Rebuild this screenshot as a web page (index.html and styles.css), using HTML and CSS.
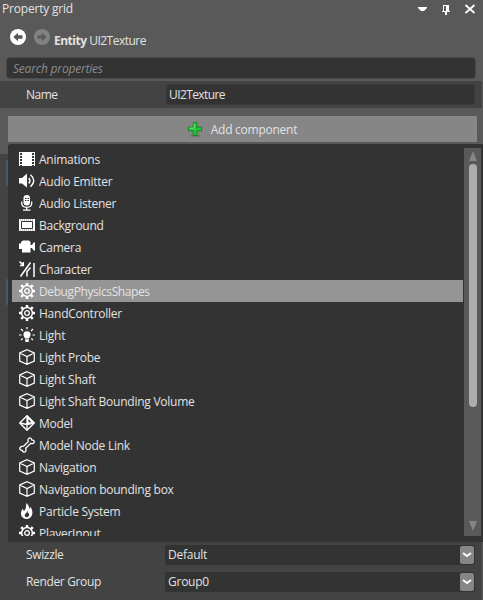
FILE: index.html
```
<!DOCTYPE html>
<html lang="en">
<head>
<meta charset="utf-8">
<title>Property grid</title>
<link rel="stylesheet" href="styles.css">
</head>
<body>
<svg class="defs" width="0" height="0" aria-hidden="true">
  <symbol id="gear" viewBox="0 0 16 16"><circle cx="8" cy="8" r="5.4" fill="none" stroke="currentColor" stroke-width="1.5"/><circle cx="8" cy="8" r="2.3" fill="none" stroke="currentColor" stroke-width="1.3"/><path d="M8 0v3M8 13v3M0 8h3M13 8h3M2.200 2.200l2 2M11.800 11.800l2 2M13.800 2.200l-2 2M4.200 11.800l-2 2" stroke="currentColor" stroke-width="2.500"/></symbol>
  <symbol id="cube" viewBox="0 0 16 16"><path d="M8 .7L15.300 4v8L8 15.300.7 12V4zM.7 4L8 7.600 15.300 4M8 7.600v7.700" fill="none" stroke="currentColor" stroke-width="1.200"/></symbol>
</svg>
<main class="panel">
  <header class="title">
    <span class="title-text">Property grid</span>
    <svg class="window-icons" width="60" height="18" viewBox="0 0 60 18"><path d="M0 7h9v1L6 11H3L0 8z" fill="#fff"/><path d="M25 5h6v6h1v1h-3v3h-2v-3h-3v-1h1zM26 6v5h2V6z" fill="#fff" fill-rule="evenodd"/><path d="M47.500 5l9 8M56.500 5l-9 8" stroke="#fff" stroke-width="1.700"/></svg>
  </header>
  <div class="crumbs">
    <svg width="16" height="16" viewBox="0 0 16 16"><circle cx="8" cy="8" r="8" fill="#fff"/><path d="M3.300 8L8 3.700v2.600h4.500v3.400H8v2.600z" fill="#555"/></svg>
    <svg width="16" height="16" viewBox="0 0 16 16"><circle cx="8" cy="8" r="8" fill="#828282"/><path d="M12.700 8L8 3.700v2.600H3.500v3.400H8v2.600z" fill="#5c5c5c"/></svg>
    <span class="entity"><b>Entity</b> UI2Texture</span>
  </div>
  <div class="search">Search properties</div>
  <div class="row name-row"><span class="label">Name</span><div class="input">UI2Texture</div></div>
  <div class="add-area">
    <div class="add">
      <svg width="14" height="15" viewBox="0 0 14 15"><ellipse cx="7" cy="13.700" rx="5" ry="1" fill="#6b6b6b"/><path d="M5.200.5h3.600v4.700h4.700v3.600H8.800v4.700H5.200V8.800H.5V5.200h4.700z" fill="#22c63a" stroke="#128a22"/><path d="M6.200 1.500v4.700H1.500" fill="none" stroke="#6bea76"/></svg>
      <span>Add component</span>
    </div>
  </div>
  <section class="properties">
    <div class="row"><span class="label">Swizzle</span><div class="combo"><span>Default</span><span class="drop"><svg width="10" height="6" viewBox="0 0 10 6"><path d="M1 1l4 3 4-3" fill="none" stroke="#fff" stroke-width="1.800"/></svg></span></div></div>
    <div class="row"><span class="label">Render Group</span><div class="combo"><span>Group0</span><span class="drop"><svg width="10" height="6" viewBox="0 0 10 6"><path d="M1 1l4 3 4-3" fill="none" stroke="#fff" stroke-width="1.800"/></svg></span></div></div>
  </section>
  <i class="mark mark-top"></i><i class="mark mark-mid"></i>
  <div class="popup">
    <ul class="list">
      <li><svg viewBox="0 0 16 16"><path d="M0 1h16v14H0z" fill="#fff"/><path d="M2 2v13M14 2v13" stroke="#333" stroke-width="2" stroke-dasharray="2 1"/></svg><span>Animations</span></li>
      <li><svg viewBox="0 0 16 16"><path d="M0 5h3l5-4.500v14L3 10.500H0z" fill="#fff"/><path d="M9.800 5q2.200 2.700 0 5.500M11.500 1.800q6.500 5.700 0 12" fill="none" stroke="#fff" stroke-width="1.500"/></svg><span>Audio Emitter</span></li>
      <li><svg viewBox="0 0 16 16"><rect x="4.500" y="0" width="6.500" height="10.500" rx="3.200" fill="#fff"/><path d="M6 3.500h1.500M8.500 3.500H10M6 5.500h1.500M8.500 5.500H10" stroke="#333"/><path d="M2.700 6.500v1.800q0 4 5 4t5-4V6.500M7.700 12v3M4 15.200h7.500" fill="none" stroke="#fff" stroke-width="1.300"/></svg><span>Audio Listener</span></li>
      <li><svg viewBox="0 0 16 16"><path d="M0 2h16v12H0z" fill="#fff"/><path d="M2.500 4.500h11v7h-11z" fill="#fff" stroke="#333"/><path d="M1 3h14M1 13h14" stroke="#333" stroke-dasharray="1 1" stroke-width=".6"/></svg><span>Background</span></li>
      <li><svg viewBox="0 0 16 16"><path d="M0 4.500h2V3l2-1.500h6L11.500 3v3H13l1.500-2.500H16v8h-1.500L13 9h-1.500v4.500H3V10H0z" fill="#fff"/></svg><span>Camera</span></li>
      <li><svg viewBox="0 0 16 16"><path d="M.5.500L4 4M4.300 1v3.500H1M1.500 15.500L11.500 1.500M8 15.500v-5l3.500-4M15 2v14" fill="none" stroke="#fff" stroke-width="1.500"/></svg><span>Character</span></li>
      <li class="selected"><svg><use href="#gear"/></svg><span>DebugPhysicsShapes</span></li>
      <li><svg><use href="#gear"/></svg><span>HandController</span></li>
      <li><svg viewBox="0 0 16 16"><path d="M6 11.500L4.500 8.500Q4 4.300 8 4.300t3.500 4.200l-1.500 3zM6 12.300h4L9.500 15h-3z" fill="#fff"/><path d="M8 0v2.300M0 8h2.500M13.500 8H16M2 2l2 2M14 2l-2 2M2 13l1.700-1.500M14 13l-1.700-1.500" stroke="#fff" stroke-width="1.200"/></svg><span>Light</span></li>
      <li><svg><use href="#cube"/></svg><span>Light Probe</span></li>
      <li><svg><use href="#cube"/></svg><span>Light Shaft</span></li>
      <li><svg><use href="#cube"/></svg><span>Light Shaft Bounding Volume</span></li>
      <li><svg viewBox="0 0 16 16"><path d="M8 .8L15.200 8 8 15.200.8 8z" fill="none" stroke="#fff" stroke-width="1.400"/><path d="M8 0v9.500L16 8z" fill="#fff"/><path d="M9.500 4v3l3 .5z" fill="#333"/><path d="M1 8l7 1.500L15 8M8 1v14" fill="none" stroke="#fff" stroke-width="1.300"/></svg><span>Model</span></li>
      <li><svg viewBox="0 0 16 16"><path d="M4.500 9.200L9.300 4.600Q8.300 1.700 10.300 1q1.800-.5 2.400 1.800 2.700.2 2.500 2-.3 2.200-3.500 1.600L6.700 11.200q1 3-.9 3.900-1.800.6-2.500-1.800-2.600-.1-2.500-1.900.4-2.200 3.700-2.200z" fill="none" stroke="#fff" stroke-width="1.300"/></svg><span>Model Node Link</span></li>
      <li><svg><use href="#cube"/></svg><span>Navigation</span></li>
      <li><svg><use href="#cube"/></svg><span>Navigation bounding box</span></li>
      <li><svg viewBox="0 0 16 16"><path d="M7 0q4 2.500 3.200 6 1.300-.5 1-2.300Q14 7 13.300 11q-1 4.500-5.300 5-5-.2-6-4.500Q1.600 8 4 5.500q0 2 1.200 2.500Q7.800 4 7 0z" fill="#fff"/><path d="M8.200 7.500q.3 2.300 1.800 3.300.6 3-2 3.400-2.500-.2-2.300-2.700Q8 10 8.200 7.500z" fill="#333"/></svg><span>Particle System</span></li>
      <li><svg><use href="#gear"/></svg><span>PlayerInput</span></li>
    </ul>
    <div class="scrollbar">
      <svg width="8" height="10" viewBox="0 0 8 10"><path d="M4 0l4 10H0z" fill="#858585"/></svg>
      <div class="thumb"></div>
      <svg class="down" width="8" height="10" viewBox="0 0 8 10"><path d="M0 0h8L4 10z" fill="#858585"/></svg>
    </div>
  </div>
</main>
</body>
</html>
```
FILE: styles.css
```
* { box-sizing: border-box; }
body {
  margin: 0;
  background: #595959;
  color: #e2e2e2;
  font: 12px/16px "Open Sans", "Noto Sans", sans-serif;
  letter-spacing: -0.25px;
}
svg { display: block; flex: none; }
.defs { position: absolute; }
.panel {
  position: relative;
  width: 483px;
  height: 600px;
  overflow: hidden;
  display: flex;
  flex-direction: column;
}
.title {
  height: 28px;
  padding: 0 7px 0 2px;
  display: flex;
  justify-content: space-between;
}
.title-text { padding-top: 1px; letter-spacing: -0.2px; }
.window-icons { margin-right: -2px; }
.crumbs {
  height: 29px;
  padding: 1px 10px 0;
  display: flex;
  gap: 8px;
}
.entity { padding-top: 4px; margin-left: -4px; letter-spacing: -0.5px; }
.search {
  height: 22px;
  margin: 0 7px 2px 6px;
  padding: 3px 6px 1px;
  border: 1px solid #4b4b4b;
  border-radius: 4px;
  background: #333;
  color: #8b8b8b;
  font-style: italic;
  letter-spacing: -0.2px;
}
.row {
  display: flex;
  align-items: center;
  height: 27px;
  background: #434343;
}
.label { width: 165px; padding-left: 26px; flex: none; }
.name-row { width: 482px; padding-bottom: 1px; }
.name-row .label { padding-top: 2px; letter-spacing: -0.5px; }
.input {
  width: 309px;
  height: 21px;
  margin-left: 1px;
  padding: 2px 2px 0;
  border-radius: 3px;
  border: 1px solid #393939;
  background: #333;
  letter-spacing: -0.6px;
}
.add-area { height: 46px; padding: 8px 6px 4px 8px; }
.add {
  height: 26px;
  background: #868686;
  display: flex;
  align-items: center;
  justify-content: center;
  gap: 9px;
}
.add span { padding-top: 1px; }
.properties {
  flex: 1;
  width: 482px;
  padding-top: 387px;
  background: #434343;
}
.properties .label { letter-spacing: -0.35px; }
.combo {
  width: 310px;
  height: 20px;
  padding: 1px 1px 1px 3px;
  background: #333;
  border-radius: 2px;
  display: flex;
  justify-content: space-between;
}
.combo > span:first-child { padding-top: 1px; }
.drop {
  width: 14px;
  height: 18px;
  border-radius: 2px;
  background: #868686;
  display: flex;
  align-items: center;
  justify-content: center;
}
.mark {
  position: absolute;
  left: 6px;
  width: 2px;
  height: 26px;
  background: #355d7b;
}
.mark-top { top: 160px; }
.mark-mid { top: 279px; }
.popup {
  position: absolute;
  left: 8px;
  top: 144px;
  width: 475px;
  height: 398px;
  padding: 4px 2px 6px 4px;
  border-radius: 3px 0 0 3px;
  background: #333;
  display: flex;
  gap: 1px;
}
.list {
  flex: 1;
  height: 388px;
  margin: 0;
  padding: 0;
  list-style: none;
  overflow: hidden;
}
.list li {
  height: 22px;
  padding-left: 7px;
  display: flex;
  align-items: center;
  gap: 4px;
}
.list svg { width: 16px; height: 16px; color: #fff; }
.list span { padding-top: 2px; white-space: nowrap; }
.list .selected { background: #959595; letter-spacing: -0.4px; }
.scrollbar {
  width: 17px;
  height: 388px;
  padding: 3px 4px;
  background: #595959;
  display: flex;
  flex-direction: column;
  align-items: center;
}
.thumb {
  width: 8px;
  height: 243px;
  margin-top: 3px;
  border-radius: 4px;
  background: #adadad;
}
.down { margin-top: auto; margin-bottom: 2px; }
```
